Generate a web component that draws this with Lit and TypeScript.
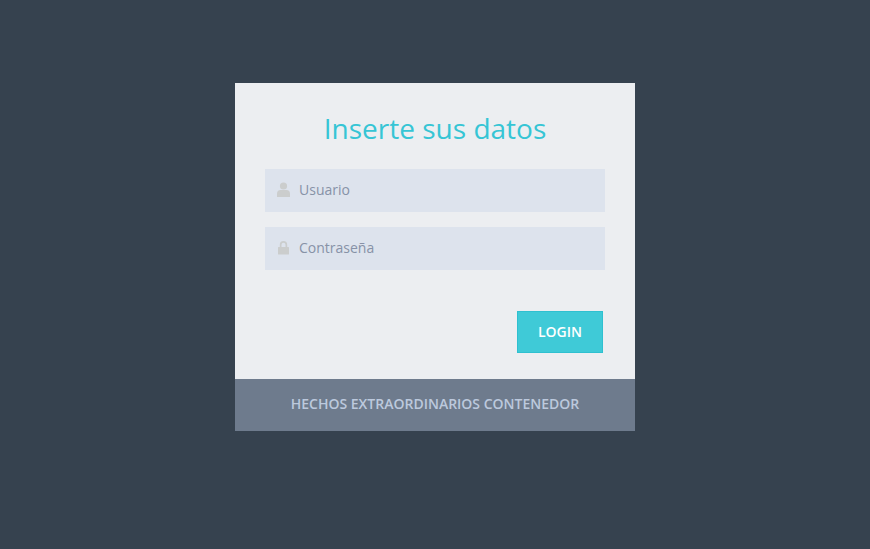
import { LitElement, html, css } from "lit";
import { customElement } from "lit/decorators.js";

@customElement("app-root")
export class AppRoot extends LitElement {
  static styles = css`
    :host {
      display: block;
      min-height: 549px;
      background: #36424f;
      font-family: "Open Sans", sans-serif;
      box-sizing: border-box;
      padding-top: 83px;
    }
    .card {
      width: 400px;
      margin: 0 auto;
      background: #eceef1;
    }
    .body {
      height: 296px;
      box-sizing: border-box;
      padding: 0 30px;
      display: flex;
      flex-direction: column;
    }
    h1 {
      margin: 0;
      height: 86px;
      line-height: 91px;
      font-size: 28px;
      font-weight: 400;
      color: #36c5d5;
      text-align: center;
    }
    .field {
      height: 43px;
      box-sizing: border-box;
      display: flex;
      align-items: center;
      gap: 9px;
      padding: 0 0 2px 12px;
      background: #dde3ed;
      margin-bottom: 15px;
      font-size: 14px;
      color: #8792a7;
    }
    .field svg {
      width: 13px;
      height: 15px;
      fill: #cbcdcd;
      flex: none;
    }
    .actions {
      display: flex;
      justify-content: flex-end;
      padding: 26px 2px 0 0;
    }
    button {
      width: 86px;
      height: 42px;
      box-sizing: border-box;
      border: 1px solid #2fc0d0;
      background: #3fcad7;
      color: #fff;
      font: 600 14px "Open Sans", sans-serif;
      padding: 0 0 2px;
    }
    .foot {
      height: 52px;
      background: #6e7b8d;
      color: #bcc9dd;
      font-size: 14px;
      font-weight: 600;
      line-height: 49px;
      text-align: center;
    }
  `;

  render() {
    return html`
      <div class="card">
        <div class="body">
          <h1>Inserte sus datos</h1>
          <div class="field">
            <svg viewBox="0 0 13 15"><circle cx="6.5" cy="4" r="3.6"/><path d="M0 15v-3.600C0 9.200 1.800 8 3.600 8h5.800C11.200 8 13 9.200 13 11.400V15z"/></svg>
            <span>Usuario</span>
          </div>
          <div class="field">
            <svg viewBox="0 0 13 15"><path fill-rule="evenodd" d="M1.600 14.500a.6.6 0 0 1-.6-.6V7.600c0-.4.3-.6.6-.6H2.800V4.700a3.700 3.700 0 0 1 7.400 0V7h1.200c.3 0 .6.2.6.6v6.300a.6.6 0 0 1-.6.6zM4.500 7h4V4.700a2 2 0 0 0-4 0z"/></svg>
            <span>Contraseña</span>
          </div>
          <div class="actions"><button>LOGIN</button></div>
        </div>
        <div class="foot">HECHOS EXTRAORDINARIOS CONTENEDOR</div>
      </div>
    `;
  }
}
